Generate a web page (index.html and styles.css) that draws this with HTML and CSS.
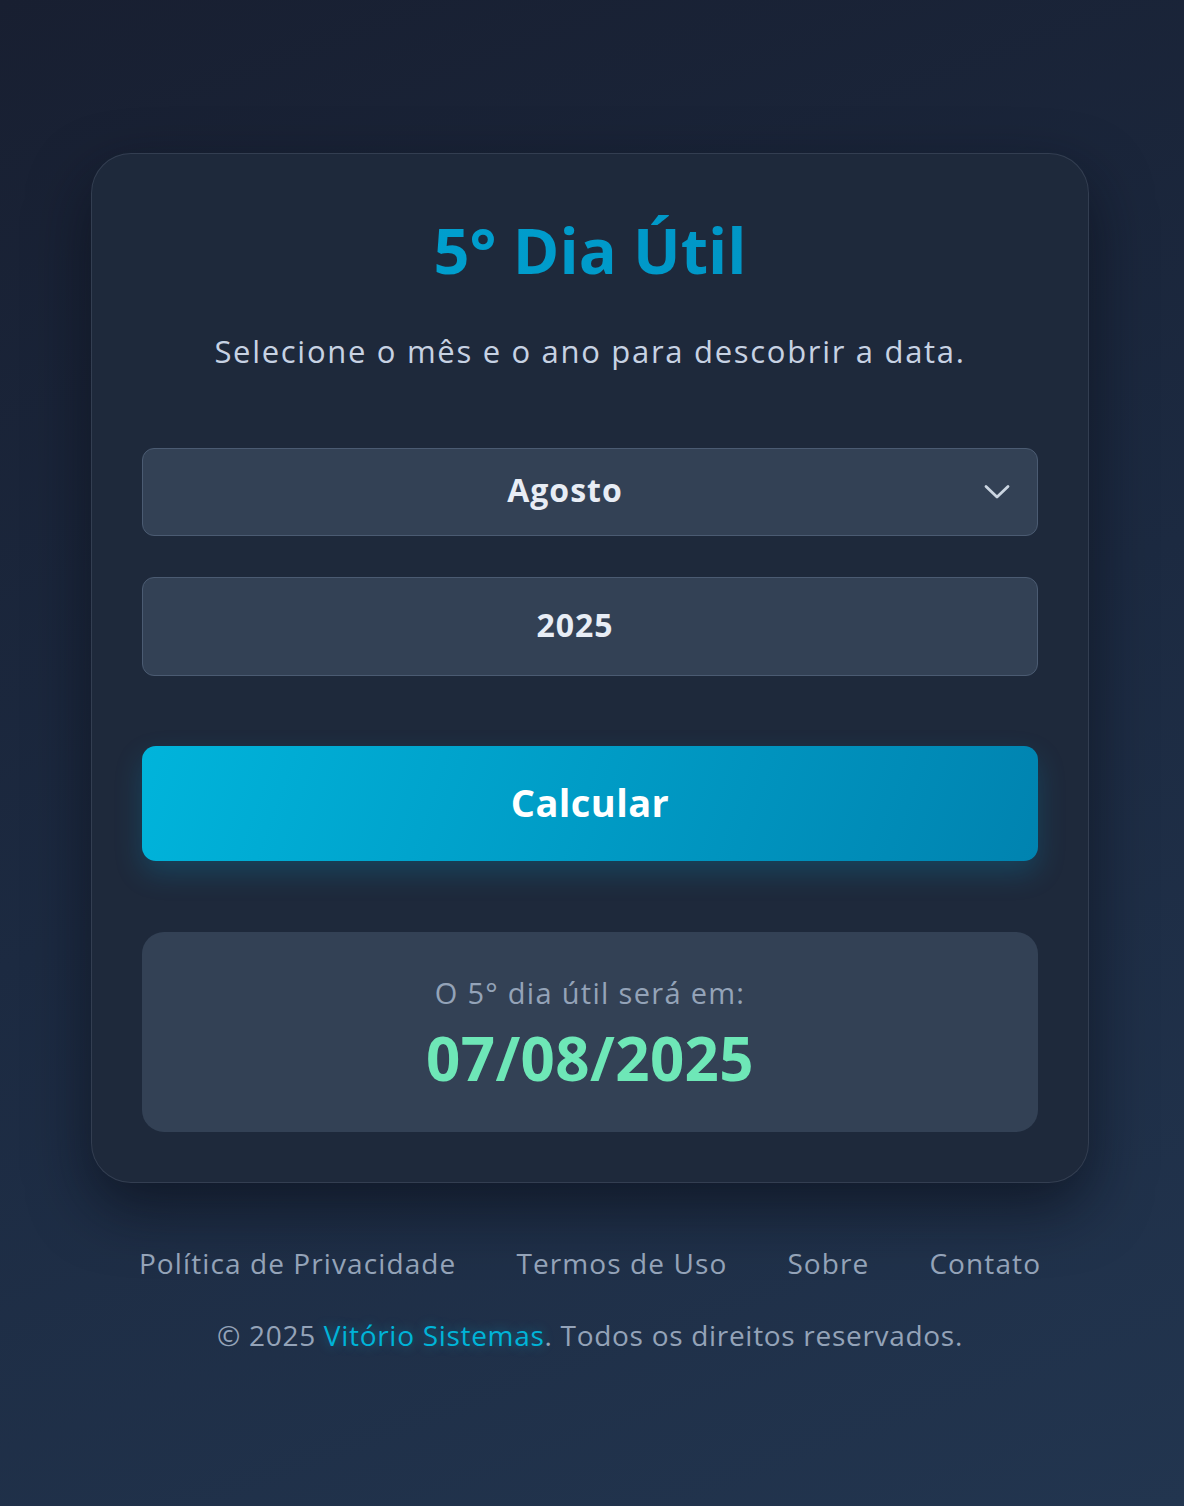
FILE: index.html
```html
<!DOCTYPE html>
<html lang="pt-BR">
<head>
<meta charset="utf-8">
<title>5º Dia Útil</title>
<link rel="stylesheet" href="styles.css">
</head>
<body>
<div class="page">
  <main class="card">
    <h1 class="title">5° Dia Útil</h1>
    <p class="subtitle">Selecione o mês e o ano para descobrir a data.</p>
    <form class="form">
      <div class="select-wrap">
        <select class="field field-select" aria-label="Mês">
          <option>Janeiro</option>
          <option>Fevereiro</option>
          <option>Março</option>
          <option>Abril</option>
          <option>Maio</option>
          <option>Junho</option>
          <option>Julho</option>
          <option selected>Agosto</option>
          <option>Setembro</option>
          <option>Outubro</option>
          <option>Novembro</option>
          <option>Dezembro</option>
        </select>
        <svg class="chevron" width="26" height="16" viewBox="0 0 26 16" aria-hidden="true"><path d="M2 2.5 L13 13 L24 2.5" fill="none" stroke="#cbd5e1" stroke-width="2.8" stroke-linecap="round" stroke-linejoin="round"/></svg>
      </div>
      <input class="field field-year" type="text" value="2025" aria-label="Ano">
      <button type="button" class="btn">Calcular</button>
    </form>
    <section class="result">
      <p class="result-label">O 5° dia útil será em:</p>
      <p class="result-date">07/08/2025</p>
    </section>
  </main>
  <footer class="footer">
    <nav class="links">
      <a href="#">Política de Privacidade</a>
      <a href="#">Termos de Uso</a>
      <a href="#">Sobre</a>
      <a href="#">Contato</a>
    </nav>
    <p class="copy">© 2025 <span class="brand">Vitório Sistemas</span>. Todos os direitos reservados.</p>
  </footer>
</div>
</body>
</html>
```
FILE: styles.css
```css
* { box-sizing: border-box; }
html, body { margin: 0; padding: 0; }
body {
  min-height: 100vh;
  padding-right: 4px;
  background: linear-gradient(160deg, #181f31 0%, #1c2a41 50%, #22354f 100%);
  font-family: "Open Sans", "Noto Sans", sans-serif;
  color: #e2e8f0;
}
.page {
  width: 998px;
  margin: 0 auto;
  padding-top: 153px;
  padding-bottom: 100px;
}
.card {
  background: #1e293b;
  border: 1px solid rgba(148, 163, 184, 0.18);
  border-radius: 40px;
  padding: 50px;
  box-shadow: 0 25px 60px rgba(8, 12, 22, 0.6);
}
.title {
  margin: 0;
  height: 92px;
  line-height: 92px;
  text-align: center;
  font-size: 63px;
  font-weight: 700;
  letter-spacing: 0;
  background: linear-gradient(90deg, #00a6d4, #008fc0);
  -webkit-background-clip: text;
  background-clip: text;
  color: transparent;
}
.subtitle {
  margin: 35px 0 0;
  line-height: 40px;
  text-align: center;
  font-size: 31px;
  letter-spacing: 1.7px;
  color: #c7d2e3;
}
.form {
  margin-top: 77px;
  display: flex;
  flex-direction: column;
}
.select-wrap { position: relative; }
.field {
  display: block;
  width: 100%;
  margin: 0;
  background: #334155;
  border: 1px solid #4b5b72;
  border-radius: 12px;
  color: #e8edf5;
  font-family: inherit;
  font-weight: 700;
  font-size: 32px;
  letter-spacing: 1px;
  text-align: center;
  text-align-last: center;
  outline: none;
}
.field-select {
  height: 88px;
  -webkit-appearance: none;
  appearance: none;
  padding: 0 50px 5px 0;
}
.chevron {
  position: absolute;
  right: 28px;
  top: 36px;
}
.field-year {
  margin-top: 41px;
  height: 99px;
  padding: 0 30px 4px 0;
}
.btn {
  margin-top: 70px;
  height: 115px;
  padding: 0 0 4px;
  border: 0;
  border-radius: 14px;
  background: linear-gradient(110deg, #00b4db 0%, #0083b0 100%);
  color: #ffffff;
  font-family: inherit;
  font-weight: 700;
  font-size: 38px;
  letter-spacing: 0.4px;
  box-shadow: 0 12px 28px rgba(0, 160, 210, 0.22);
  cursor: pointer;
}
.result {
  margin-top: 71px;
  height: 200px;
  background: #334155;
  border-radius: 22px;
  display: flex;
  flex-direction: column;
  align-items: center;
  justify-content: center;
  padding-top: 4px;
}
.result p { margin: 0; }
.result-label {
  font-size: 29px;
  line-height: 40px;
  letter-spacing: 1.3px;
  color: #94a3b8;
}
.result-date {
  margin-top: 7px !important;
  font-size: 60px;
  font-weight: 700;
  line-height: 76px;
  letter-spacing: 0.4px;
  color: #6ee7b7;
}
.footer {
  margin-top: 60px;
  text-align: center;
}
.links {
  display: flex;
  justify-content: center;
  gap: 60px;
  line-height: 40px;
}
.links a {
  color: #94a3b8;
  text-decoration: none;
  font-size: 28px;
  letter-spacing: 1.1px;
}
.copy {
  margin: 32px 0 0;
  line-height: 40px;
  font-size: 28px;
  letter-spacing: 0.7px;
  color: #94a3b8;
}
.brand {
  color: #00b4d8;
  text-shadow: 0 0 12px rgba(0, 180, 216, 0.45);
}
```
